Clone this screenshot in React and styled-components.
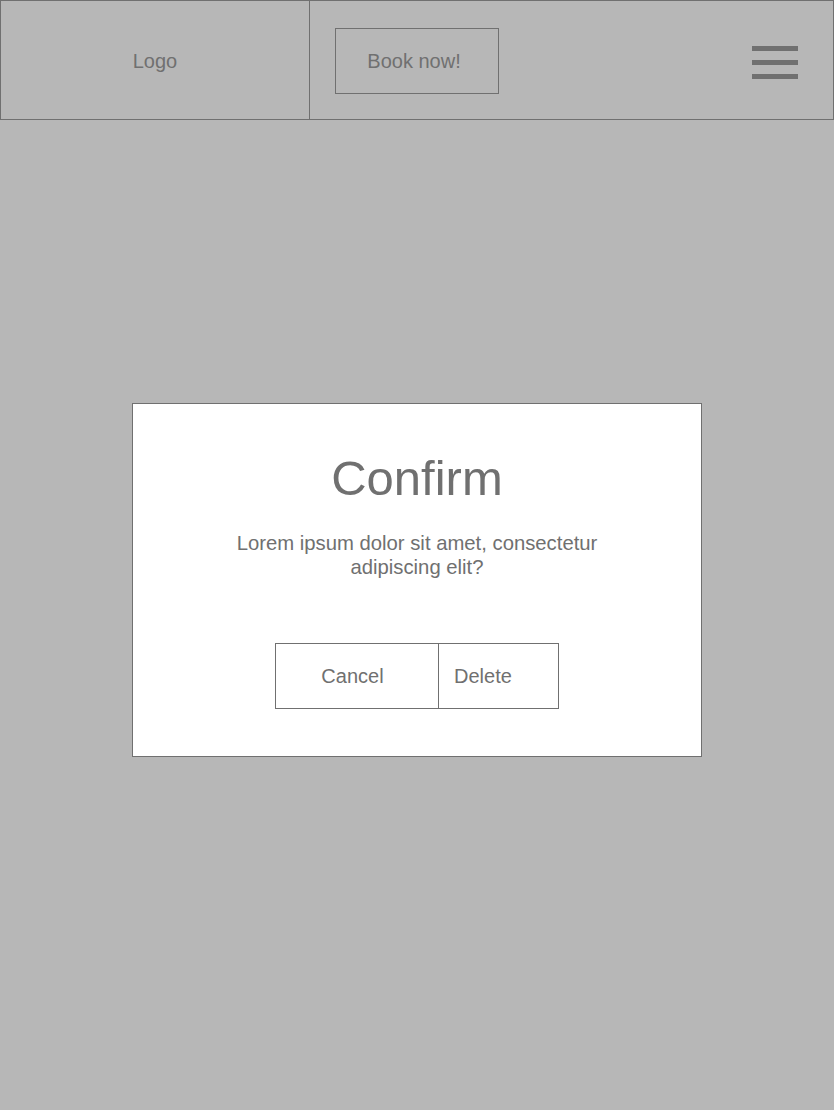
import styled, { createGlobalStyle } from 'styled-components';

const GlobalStyle = createGlobalStyle`
    html, body {
        margin: 0;
        padding: 0;
        background: #b7b7b7;
    }
    body {
        font-family: "Liberation Sans", Arial, sans-serif;
        color: #707070;
    }
    * {
        box-sizing: border-box;
    }
`

const Page = styled.div`
    width: 834px;
    min-height: 1110px;
    background: #b7b7b7;
`

const Header = styled.header`
    display: flex;
    align-items: stretch;
    height: 120px;
    border: 1px solid #707070;
`

const LogoCell = styled.div`
    width: 309px;
    border-right: 1px solid #707070;
    display: flex;
    align-items: center;
    justify-content: center;
    font-size: 20px;
    padding-top: 2px;
`

const BookBtn = styled.button`
    align-self: flex-start;
    margin: 27px 0 0 25px;
    width: 164px;
    height: 66px;
    background: transparent;
    border: 1px solid #707070;
    font-family: inherit;
    font-size: 20px;
    color: #707070;
    padding: 0 6px 0 0;
`

const Burger = styled.button`
    margin: 45px 35px 0 auto;
    align-self: flex-start;
    width: 46px;
    display: flex;
    flex-direction: column;
    gap: 9px;
    background: none;
    border: none;
    padding: 0;

    span {
        display: block;
        height: 5px;
        background: #707070;
    }
`

const Dialog = styled.section`
    width: 570px;
    margin: 283px auto 0;
    background: #fff;
    border: 1px solid #707070;
    padding: 46px 0 47px;
    display: flex;
    flex-direction: column;
    align-items: center;
`

const Title = styled.h2`
    margin: 0;
    font-size: 49px;
    font-weight: 400;
    line-height: 56px;
`

const Message = styled.p`
    margin: 25px 0 0;
    max-width: 400px;
    text-align: center;
    font-size: 20.3px;
    line-height: 24px;
`

const Actions = styled.div`
    display: flex;
    margin-top: 64px;
`

const ActionBtn = styled.button`
    width: ${p => p.$w}px;
    height: 66px;
    margin-left: ${p => (p.$joined ? '-1px' : '0')};
    background: #fff;
    border: 1px solid #707070;
    font-family: inherit;
    font-size: 20px;
    color: #707070;
    text-align: ${p => p.$align};
    padding: ${p => (p.$align === 'left' ? '0 0 0 15px' : '0 9px 0 0')};
`

const App = () => {
    return (
        <Page>
            <GlobalStyle />
            <Header>
                <LogoCell>Logo</LogoCell>
                <BookBtn type="button">Book now!</BookBtn>
                <Burger type="button" aria-label="menu">
                    <span />
                    <span />
                    <span />
                </Burger>
            </Header>
            <Dialog>
                <Title>Confirm</Title>
                <Message>Lorem ipsum dolor sit amet, consectetur adipiscing elit?</Message>
                <Actions>
                    <ActionBtn type="button" $w={164} $align="center">Cancel</ActionBtn>
                    <ActionBtn type="button" $w={121} $align="left" $joined>Delete</ActionBtn>
                </Actions>
            </Dialog>
        </Page>
    )
}

export default App;
